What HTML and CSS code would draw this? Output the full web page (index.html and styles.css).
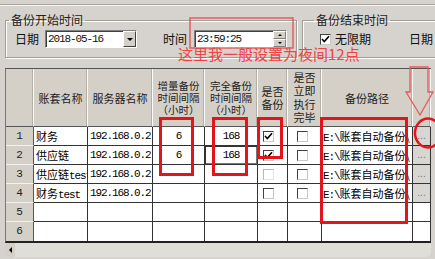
FILE: index.html
```html
<!DOCTYPE html>
<html lang="zh">
<head>
<meta charset="utf-8">
<link rel="stylesheet" href="styles.css">
</head>
<body>
<div class="topbar"></div>
<div class="groups">
  <fieldset class="grp grp-start">
    <legend>备份开始时间</legend>
    <div class="ctrl-row">
      <span class="lbl">日期</span>
      <div class="field combo"><span class="val">2018-05-16</span><span class="dd"><span class="tri-down"></span></span></div>
      <span class="lbl lbl-time">时间</span>
      <div class="field spinbox"><span class="val">23:59:25</span><span class="spin"><span class="sp"><span class="tri-up-s"></span></span><span class="sp"><span class="tri-down-s"></span></span></span></div>
    </div>
  </fieldset>
  <fieldset class="grp grp-end">
    <legend>备份结束时间</legend>
    <div class="ctrl-row">
      <span class="cb cb-top"><svg viewBox="0 0 11 11" width="11" height="11"><path d="M2 5 L4.3 7.5 L9 2.2" fill="none" stroke="#000" stroke-width="1.6"/></svg></span>
      <span class="lbl">无限期</span>
      <span class="lbl lbl-date2">日期</span>
    </div>
  </fieldset>
</div>

<div class="grid">
  <div class="h"></div>
  <div class="h">账套名称</div>
  <div class="h">服务器名称</div>
  <div class="h h3">增量备份<br>时间间隔<br>（小时）</div>
  <div class="h h3">完全备份<br>时间间隔<br>（小时）</div>
  <div class="h h2">是否<br>备份</div>
  <div class="h h4">是否<br>立即<br>执行<br>完毕</div>
  <div class="h">备份路径</div>
  <div class="h"></div>

  <div class="c n">1</div>
  <div class="c">财务</div>
  <div class="c mono">192.168.0.2</div>
  <div class="c mono ctr">6</div>
  <div class="c mono ctr">168</div>
  <div class="c ck1"><span class="cb"><svg viewBox="0 0 11 11" width="11" height="11"><path d="M2 5 L4.3 7.5 L9 2.2" fill="none" stroke="#000" stroke-width="1.6"/></svg></span></div>
  <div class="c ck2"><span class="cb"></span></div>
  <div class="c path"><span class="mono">E:\</span>账套自动备份\</div>
  <div class="c btn">...</div>

  <div class="c n">2</div>
  <div class="c">供应链</div>
  <div class="c mono">192.168.0.2</div>
  <div class="c mono ctr">6</div>
  <div class="c mono ctr edit">168</div>
  <div class="c ck1"><span class="cb"><svg viewBox="0 0 11 11" width="11" height="11"><path d="M2 5 L4.3 7.5 L9 2.2" fill="none" stroke="#000" stroke-width="1.6"/></svg></span></div>
  <div class="c ck2"><span class="cb"></span></div>
  <div class="c path"><span class="mono">E:\</span>账套自动备份\</div>
  <div class="c btn">...</div>

  <div class="c n">3</div>
  <div class="c">供应链<span class="mono">test</span></div>
  <div class="c mono">192.168.0.2</div>
  <div class="c"></div>
  <div class="c"></div>
  <div class="c ck1"><span class="cb faint"></span></div>
  <div class="c ck2"><span class="cb"></span></div>
  <div class="c path"><span class="mono">E:\</span>账套自动备份\</div>
  <div class="c btn">...</div>

  <div class="c n">4</div>
  <div class="c">财务<span class="mono">test</span></div>
  <div class="c mono">192.168.0.2</div>
  <div class="c"></div>
  <div class="c"></div>
  <div class="c ck1"><span class="cb"></span></div>
  <div class="c ck2"><span class="cb"></span></div>
  <div class="c path"><span class="mono">E:\</span>账套自动备份\</div>
  <div class="c btn">...</div>

  <div class="c n">5</div>
  <div class="c"></div><div class="c"></div><div class="c"></div><div class="c"></div>
  <div class="c"></div><div class="c"></div><div class="c"></div><div class="c"></div>

  <div class="c n lr">6</div>
  <div class="c lr"></div><div class="c lr"></div><div class="c lr"></div><div class="c lr"></div>
  <div class="c lr"></div><div class="c lr"></div><div class="c lr"></div><div class="c lr"></div>
</div>

<div class="hscroll"><span class="hs-btn"><span class="tri-left"></span></span></div>

<div class="note">这里我一般设置为夜间12点</div>
<svg class="annot" width="435" height="259" viewBox="0 0 435 259">
  <rect x="190" y="18" width="103" height="30" fill="none" stroke="#e84a4c" stroke-width="1.3"/>
  <rect x="160.5" y="118.5" width="32" height="56" fill="none" stroke="#e3141c" stroke-width="3"/>
  <rect x="213.5" y="118.5" width="33" height="56" fill="none" stroke="#e3141c" stroke-width="3"/>
  <rect x="258.5" y="118.5" width="23" height="39" fill="none" stroke="#e3141c" stroke-width="3"/>
  <rect x="321.5" y="118.5" width="85" height="104" fill="none" stroke="#e3141c" stroke-width="3"/>
  <polygon points="410,67 428,67 428,92 433,92 420,115 406,92 410,92" fill="none" stroke="#e8585a" stroke-width="1.3"/>
  <ellipse cx="428" cy="133" rx="13" ry="14.5" fill="none" stroke="#e3141c" stroke-width="2.5"/>
</svg>
</body>
</html>
```

FILE: styles.css
```css
html, body {
  margin: 0;
  padding: 0;
}
body {
  width: 435px;
  height: 259px;
  overflow: hidden;
  position: relative;
  background: #d6d3ce;
  font-family: "Noto Sans CJK SC", sans-serif;
  color: #111;
}
.topbar {
  height: 4px;
  border-bottom: 1px solid #a8a5a0;
  box-shadow: 0 1px 0 #f4f4f4;
}
.groups {
  display: flex;
  align-items: flex-start;
  margin-top: 8px;
}
.grp {
  margin: 0;
  padding: 3px 8px 9px 9px;
  border: 1px solid #a09d96;
  box-shadow: inset 1px 1px 0 #fff, 1px 1px 0 #fff;
  box-sizing: border-box;
  min-width: 0;
  flex: none;
}
.grp legend {
  padding: 0 2px;
  margin-left: -6px;
  font-size: 12px;
  line-height: 14px;
  color: #222;
}
.grp-start {
  margin-left: 5px;
  width: 292px;
}
.grp-end {
  margin-left: 5px;
  width: 133px;
  padding-left: 17px;
  padding-right: 0;
  border-right: none;
  overflow: hidden;
}
.ctrl-row {
  display: flex;
  align-items: center;
  height: 18px;
}
.lbl {
  font-size: 12px;
  line-height: 18px;
  color: #111;
  white-space: nowrap;
}
.lbl-time { margin-left: 26px; }
.lbl-date2 { margin-left: 38px; }
.field {
  display: flex;
  align-items: stretch;
  height: 18px;
  box-sizing: border-box;
  background: #fff;
  border: 1px solid;
  border-color: #808080 #fff #fff #808080;
  box-shadow: inset 1px 1px 0 #404040;
  flex: none;
}
.combo { width: 92px; margin-left: 6px; }
.spinbox { width: 93px; margin-left: 7px; }
.val {
  flex: 1;
  font-family: "Liberation Mono", monospace;
  font-size: 11px;
  letter-spacing: -1.1px;
  line-height: 16px;
  padding-left: 2px;
  color: #111;
  white-space: nowrap;
  overflow: hidden;
}
.dd {
  width: 11px;
  background: #d4d0c8;
  border: 1px solid;
  border-color: #fff #404040 #404040 #fff;
  display: flex;
  align-items: center;
  justify-content: center;
}
.tri-down {
  width: 0; height: 0;
  border-left: 3px solid transparent;
  border-right: 3px solid transparent;
  border-top: 3px solid #000;
}
.spin {
  width: 13px;
  display: flex;
  flex-direction: column;
}
.sp {
  flex: 1;
  background: #d4d0c8;
  border: 1px solid;
  border-color: #fff #808080 #808080 #fff;
  display: flex;
  align-items: center;
  justify-content: center;
}
.tri-up-s {
  width: 0; height: 0;
  border-left: 2px solid transparent;
  border-right: 2px solid transparent;
  border-bottom: 2px solid #000;
}
.tri-down-s {
  width: 0; height: 0;
  border-left: 2px solid transparent;
  border-right: 2px solid transparent;
  border-top: 2px solid #000;
}
.cb {
  display: inline-block;
  width: 11px;
  height: 11px;
  box-sizing: border-box;
  background: #fff;
  border: 1px solid;
  border-color: #404040 #c8c8c8 #c8c8c8 #404040;
  position: relative;
  flex: none;
}
.cb svg {
  position: absolute;
  left: -1px;
  top: -1px;
}
.cb.faint { border-color: #b8b8b8 #e4e4e4 #e4e4e4 #b8b8b8; }
.cb-top { margin-right: 4px; }

.grid {
  margin: 10px 0 0 5px;
  width: 426px;
  box-sizing: border-box;
  border-top: 1px solid #555;
  border-left: 1px solid #777;
  border-bottom: 2px solid #222;
  display: grid;
  grid-template-columns: 28px 54px 65px 52px 53px 30px 34px 91px 18px;
  grid-template-rows: 58px repeat(6, 19px);
  background: #fff;
}
.h {
  background: #d4d0c8;
  border-right: 1px solid #fafafa;
  border-bottom: 1px solid #555;
  box-shadow: inset -1px 0 0 #b4b0a8;
  box-sizing: border-box;
  display: flex;
  align-items: center;
  justify-content: center;
  text-align: center;
  font-size: 11px;
  line-height: 12px;
  color: #222;
  overflow: hidden;
  white-space: nowrap;
}
.h3 { line-height: 12px; font-size: 10.5px; }
.h2 { line-height: 13px; }
.h4 { line-height: 13.5px; }
.c {
  border-right: 1px solid #333;
  border-bottom: 1px solid #333;
  box-sizing: border-box;
  overflow: hidden;
  white-space: nowrap;
  font-size: 11px;
  line-height: 18px;
  padding-left: 2px;
  color: #000;
}
.c.lr { border-bottom: none; }
.n {
  background: #d4d0c8;
  border-right: 1px solid #555;
  border-bottom: 1px solid #f2f2f2;
  text-align: center;
  padding-left: 0;
  font-family: "Liberation Mono", monospace;
  color: #222;
}
.mono {
  font-family: "Liberation Mono", monospace;
  letter-spacing: -1.1px;
}
.ctr { text-align: center; padding-left: 0; }
.edit { box-shadow: inset 1px 1px 0 #333, inset -1px -1px 0 #777; }
.ck1, .ck2 { display: flex; align-items: center; }
.ck1 { padding-left: 5px; }
.ck2 { padding-left: 9px; }
.path { padding-left: 1px; }
.btn {
  background: #d8d6d2;
  color: #777;
  text-align: center;
  padding-left: 0;
  letter-spacing: 0;
  font-family: "Liberation Sans", sans-serif;
  font-size: 10px;
}
.hscroll {
  margin-left: 5px;
  width: 426px;
  height: 14px;
  background: #e0ded9;
  border-radius: 0 0 5px 0;
  display: flex;
}
.hs-btn {
  width: 10px;
  background: #d4d0c8;
  display: flex;
  align-items: center;
  justify-content: center;
}
.tri-left {
  width: 0; height: 0;
  border-top: 3px solid transparent;
  border-bottom: 3px solid transparent;
  border-right: 3px solid #000;
}
.note {
  position: absolute;
  left: 178px;
  top: 45px;
  font-size: 15px;
  line-height: 18px;
  color: #f04444;
  white-space: nowrap;
}
.annot {
  position: absolute;
  left: 0;
  top: 0;
  pointer-events: none;
}
```
